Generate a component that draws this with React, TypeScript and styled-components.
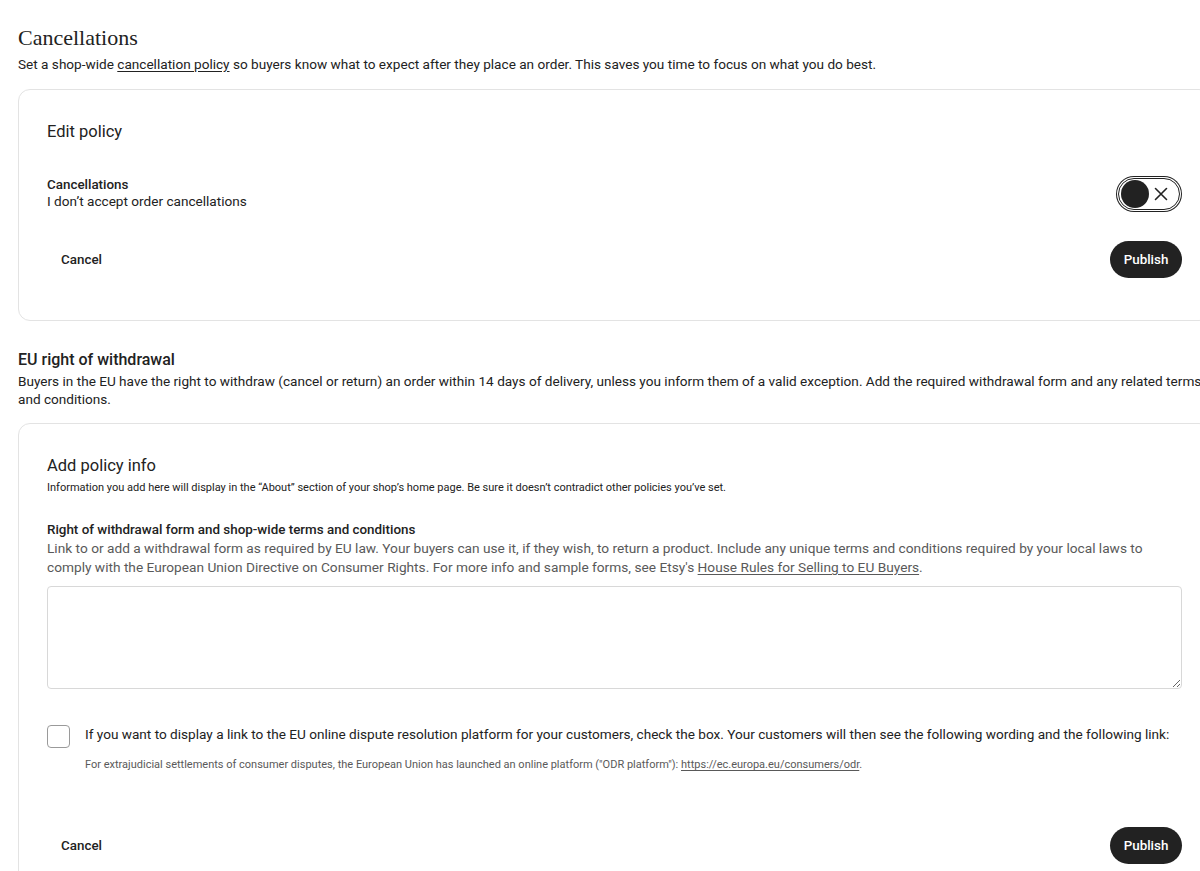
import React, { useState } from "react";
import styled, { createGlobalStyle } from "styled-components";

const GlobalStyle = createGlobalStyle`
  html, body {
    margin: 0;
    padding: 0;
    background: #ffffff;
    overflow: hidden;
  }
  body {
    font-family: "Roboto", "Liberation Sans", Arial, sans-serif;
    color: #222222;
    -webkit-font-smoothing: antialiased;
  }
  * {
    box-sizing: border-box;
  }
`;

const Page = styled.div`
  width: 1193px;
  margin-left: 18px;
  padding-top: 24px;
`;

const PageTitle = styled.h1`
  margin: 0;
  font-family: "Liberation Serif", "DejaVu Serif", serif;
  font-weight: 400;
  font-size: 22px;
  line-height: 28px;
  color: #222;
`;

const SectionTitle = styled.h2`
  margin: 28px 0 0;
  font-size: 16px;
  line-height: 22px;
  font-weight: 500;
  color: #222;
`;

const Lead = styled.p<{ $top?: number; $bottom?: number }>`
  margin: ${(p) => p.$top ?? 3}px 0 ${(p) => p.$bottom ?? 16}px;
  font-size: 13.6px;
  line-height: 18px;
  color: #222;
`;

const TextLink = styled.a`
  color: inherit;
  text-decoration: underline;
  text-underline-offset: 2px;
  cursor: pointer;
`;

const Card = styled.section<{ $bottom?: number }>`
  border: 1px solid #e3e3e3;
  border-radius: 12px;
  padding: 30px 28px ${(p) => p.$bottom ?? 30}px;
  background: #fff;
`;

const CardTitle = styled.h3`
  margin: 0;
  font-size: 16.5px;
  line-height: 24px;
  font-weight: 400;
  color: #222;
`;

const Hint = styled.p`
  margin: 3px 0 0;
  font-size: 11px;
  line-height: 14px;
  color: #222;
`;

const SettingRow = styled.div`
  display: flex;
  justify-content: space-between;
  align-items: flex-start;
  margin-top: 32px;
`;

const Label = styled.div`
  font-size: 13.4px;
  line-height: 17px;
  font-weight: 500;
  color: #222;
`;

const Value = styled.div`
  font-size: 13.6px;
  line-height: 17px;
  color: #222;
`;

const Toggle = styled.button`
  width: 62px;
  height: 32px;
  margin: 2px;
  padding: 0 2px;
  border: 1px solid #222;
  border-radius: 16px;
  background: #fff;
  box-shadow: 0 0 0 1px #fff, 0 0 0 2px #222;
  display: flex;
  align-items: center;
  justify-content: space-between;
  cursor: pointer;
`;

const Knob = styled.span`
  width: 28px;
  height: 28px;
  border-radius: 50%;
  background: #222;
`;

const CrossIcon = styled.svg`
  width: 14px;
  height: 14px;
  margin-right: 9px;
`;

const Footer = styled.div<{ $top: number }>`
  display: flex;
  justify-content: space-between;
  align-items: center;
  margin-top: ${(p) => p.$top}px;
`;

const GhostButton = styled.button`
  border: none;
  background: transparent;
  padding: 10px 14px;
  font-family: inherit;
  font-size: 13.4px;
  font-weight: 500;
  color: #222;
  cursor: pointer;
`;

const PrimaryButton = styled.button`
  height: 37px;
  width: 72px;
  border: none;
  border-radius: 19px;
  background: #222;
  color: #fff;
  font-family: inherit;
  font-size: 13.4px;
  font-weight: 500;
  cursor: pointer;
`;

const FieldLabel = styled.div`
  margin-top: 26px;
  font-size: 13.4px;
  line-height: 18px;
  font-weight: 500;
  color: #222;
`;

const FieldHelp = styled.p`
  margin: 0;
  font-size: 13.7px;
  line-height: 19px;
  color: #595959;
`;

const TextArea = styled.textarea`
  display: block;
  width: 100%;
  height: 103px;
  margin-top: 9px;
  border: 1px solid #d8d8d8;
  border-radius: 4px;
  padding: 10px;
  font-family: inherit;
  font-size: 13px;
  resize: vertical;
  outline: none;
`;

const CheckRow = styled.label`
  display: flex;
  align-items: flex-start;
  gap: 15px;
  margin-top: 36px;
  cursor: pointer;
`;

const CheckBox = styled.span<{ $checked: boolean }>`
  flex: none;
  width: 23px;
  height: 23px;
  border: 1px solid #9a9a9a;
  border-radius: 4px;
  background: ${(p) => (p.$checked ? "#222" : "#fff")};
`;

const CheckText = styled.div`
  font-size: 13.6px;
  line-height: 18px;
  color: #222;
`;

const Fine = styled.p`
  margin: 15px 0 0;
  font-size: 11px;
  line-height: 14px;
  color: #595959;
`;

const App: React.FC = () => {
  const [accepts, setAccepts] = useState(false);
  const [odr, setOdr] = useState(false);

  return (
    <>
      <GlobalStyle />
      <Page>
        <PageTitle>Cancellations</PageTitle>
        <Lead>
          Set a shop-wide <TextLink>cancellation policy</TextLink> so buyers
          know what to expect after they place an order. This saves you time to
          focus on what you do best.
        </Lead>

        <Card $bottom={42}>
          <CardTitle>Edit policy</CardTitle>
          <SettingRow>
            <div>
              <Label>Cancellations</Label>
              <Value>I don’t accept order cancellations</Value>
            </div>
            <Toggle onClick={() => setAccepts(!accepts)} aria-pressed={accepts}>
              <Knob />
              <CrossIcon viewBox="0 0 14 14">
                <path
                  d="M1.5 1.5 L12.5 12.5 M12.5 1.5 L1.5 12.5"
                  stroke="#222"
                  strokeWidth="1.6"
                  strokeLinecap="round"
                  fill="none"
                />
              </CrossIcon>
            </Toggle>
          </SettingRow>
          <Footer $top={29}>
            <GhostButton>Cancel</GhostButton>
            <PrimaryButton>Publish</PrimaryButton>
          </Footer>
        </Card>

        <SectionTitle>EU right of withdrawal</SectionTitle>
        <Lead $top={1} $bottom={15}>
          Buyers in the EU have the right to withdraw (cancel or return) an
          order within 14 days of delivery, unless you inform them of a valid
          exception. Add the required withdrawal form and any related terms and
          conditions.
        </Lead>

        <Card>
          <CardTitle>Add policy info</CardTitle>
          <Hint>
            Information you add here will display in the “About” section of your
            shop’s home page. Be sure it doesn’t contradict other policies
            you’ve set.
          </Hint>
          <FieldLabel>
            Right of withdrawal form and shop-wide terms and conditions
          </FieldLabel>
          <FieldHelp>
            Link to or add a withdrawal form as required by EU law. Your buyers
            can use it, if they wish, to return a product. Include any unique
            terms and conditions required by your local laws to comply with the
            European Union Directive on Consumer Rights. For more info and
            sample forms, see Etsy's{" "}
            <TextLink>House Rules for Selling to EU Buyers</TextLink>.
          </FieldHelp>
          <TextArea />
          <CheckRow onClick={() => setOdr(!odr)}>
            <CheckBox $checked={odr} />
            <div>
              <CheckText>
                If you want to display a link to the EU online dispute
                resolution platform for your customers, check the box. Your
                customers will then see the following wording and the following
                link:
              </CheckText>
              <Fine>
                For extrajudicial settlements of consumer disputes, the European
                Union has launched an online platform ("ODR platform"):{" "}
                <TextLink>https://ec.europa.eu/consumers/odr</TextLink>.
              </Fine>
            </div>
          </CheckRow>
          <Footer $top={55}>
            <GhostButton>Cancel</GhostButton>
            <PrimaryButton>Publish</PrimaryButton>
          </Footer>
        </Card>
      </Page>
    </>
  );
};

export default App;
